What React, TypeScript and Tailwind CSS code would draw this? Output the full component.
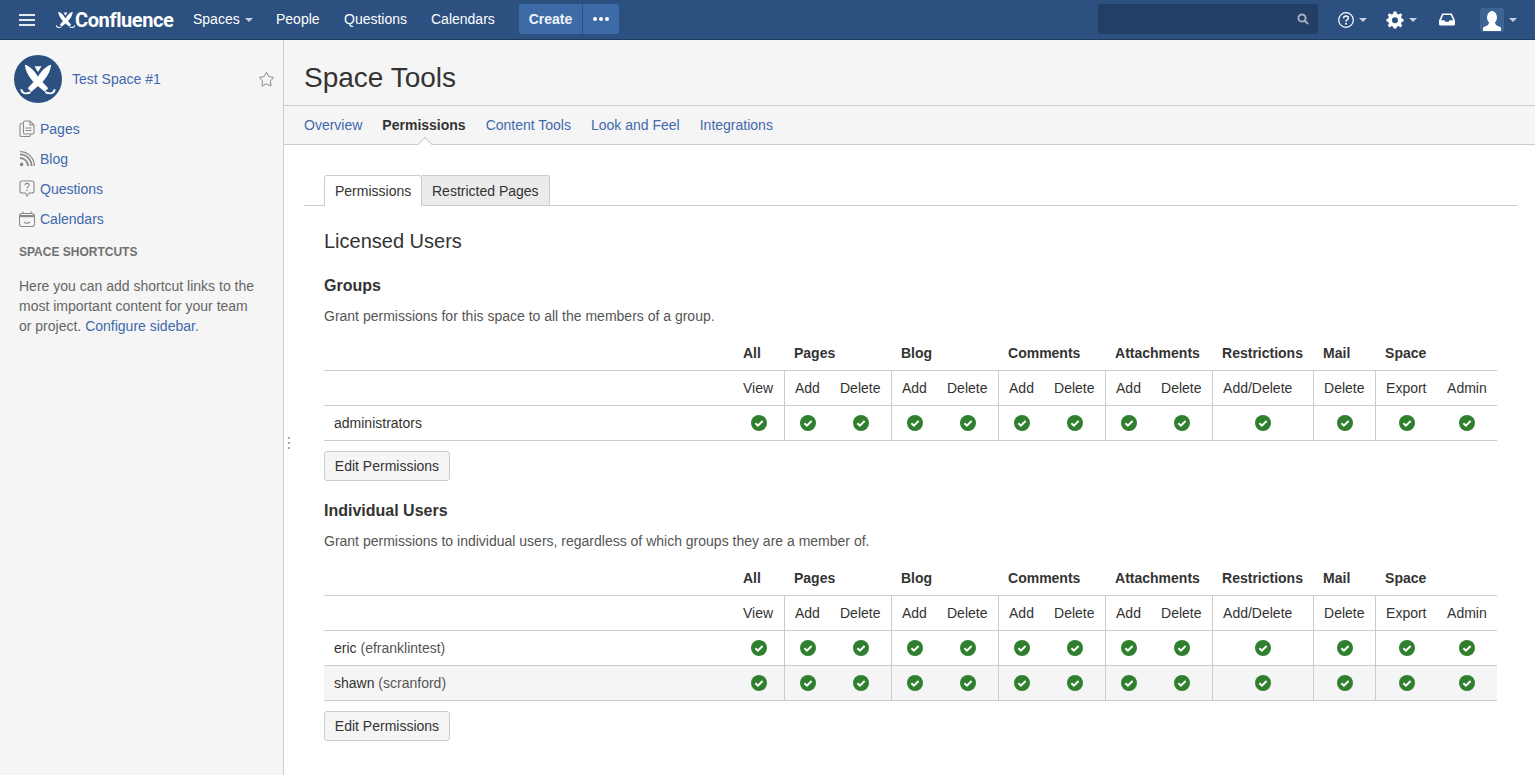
import React from 'react';
import { Star } from 'lucide-react';

const font = "[font-family:'Liberation_Sans',Arial,sans-serif]";

function Caret({ className = '' }: { className?: string }) {
	return <span className={`inline-block w-0 h-0 border-x-[4px] border-x-transparent border-t-[4px] ${className}`} />;
}

function CheckIcon() {
	return (
		<svg width="16" height="16" viewBox="0 0 16 16" className="block mx-auto">
			<circle cx="8" cy="8" r="8" fill="#2f7f2f" />
			<path d="M4.4 8.2 L6.9 10.6 L11.6 6" fill="none" stroke="#fff" strokeWidth="2" />
		</svg>
	);
}

// same mark in the sidebar circle and the top bar
function SpaceLogo({ size, className = '' }: { size: number; className?: string }) {
	return (
		<svg width={size} height={size} viewBox="5 8 39 33" className={`shrink-0 ${className}`} fill="#fff">
			<path d="M11 10 C16 11 21 16 25 23 L35 34 L31.5 37.5 C21 30 12 21 11 10 Z" />
			<path d="M38 10 C33 11 28 16 24 23 L14 34 L17.5 37.5 C28 30 37 21 38 10 Z" />
			<path d="M21 11.5 H28 L24.5 17.5 Z" />
			<path d="M17 38 C12 40.5 7.5 39 7.5 35" fill="none" stroke="#fff" strokeWidth="2" />
			<path d="M32 38 C37 40.5 41.5 39 41.5 35" fill="none" stroke="#fff" strokeWidth="2" />
		</svg>
	);
}

function PagesIcon() {
	return (
		<svg width="16" height="18" viewBox="0 0 16 18" fill="none" stroke="#8a8a8a" strokeWidth="1.1">
			<path d="M3.5 3.5 H2.5 Q1 3.5 1 5 V15 Q1 16.5 2.5 16.5 H10 Q11.5 16.5 11.5 15 V14" />
			<path d="M6 1 H11 L15 5 V12.5 Q15 14 13.5 14 H6 Q4.5 14 4.5 12.5 V2.5 Q4.5 1 6 1 Z" />
			<path d="M11 1 V5 H15 M6.5 8 H12.5 M6.5 10.5 H12.5" />
		</svg>
	);
}

function BlogIcon() {
	return (
		<svg width="16" height="16" viewBox="0 0 16 16" fill="none" stroke="#8a8a8a" strokeWidth="1.8">
			<circle cx="2.6" cy="13.4" r="1.8" fill="#8a8a8a" stroke="none" />
			<path d="M1 7 A8 8 0 0 1 9 15" />
			<path d="M1 3.4 A11.6 11.6 0 0 1 12.6 15" />
			<path d="M1 0.6 A14.4 14.4 0 0 1 15.4 15" strokeWidth="1.2" />
		</svg>
	);
}

function QuestionsIcon() {
	return (
		<svg width="16" height="18" viewBox="0 0 16 18" fill="none" stroke="#8a8a8a" strokeWidth="1.1">
			<path d="M3 1 H13 Q15 1 15 3 V11 Q15 13 13 13 H10.5 L8 16 L6.5 13 H3 Q1 13 1 11 V3 Q1 1 3 1 Z" />
			<path d="M5.8 5.2 Q6 3.4 8 3.4 Q10.1 3.4 10.1 5.2 Q10.1 6.3 8.9 6.9 Q8 7.3 8 8.6" />
			<circle cx="8" cy="10.5" r="0.8" fill="#8a8a8a" stroke="none" />
		</svg>
	);
}

function CalendarIcon() {
	return (
		<svg width="16" height="16" viewBox="0 0 16 16" fill="none" stroke="#8a8a8a" strokeWidth="1.1">
			<path d="M3 2.5 H13 Q15.5 2.5 15.5 5 V13 Q15.5 15.5 13 15.5 H3 Q0.5 15.5 0.5 13 V5 Q0.5 2.5 3 2.5 Z" />
			<path d="M0.5 4 H15.5 V6.2 H0.5 Z" fill="#8a8a8a" stroke="none" />
			<path d="M4 0.5 V3 M12 0.5 V3" />
			<path d="M5 11 Q8 13.5 11 11" />
		</svg>
	);
}

function TopBar() {
	return (
		<header className="h-[40px] bg-[#2c5080] border-b border-[#1e3a5f] flex items-center shrink-0 text-white text-[14px]">
			<svg width="16" height="12" viewBox="0 0 16 12" className="ml-[19px]" fill="#e4e9f0">
				<rect width="16" height="2" />
				<rect y="5" width="16" height="2" />
				<rect y="10" width="16" height="2" />
			</svg>
			<div className="ml-[20px] flex items-center w-[138px] shrink-0">
				<SpaceLogo size={21} />
				<span className="[font-family:Roboto,sans-serif] font-bold text-[20px] leading-[24px] tracking-[-0.4px] -ml-px">Confluence</span>
			</div>
			<div className="flex items-center w-[83px]">
				<span>Spaces</span>
				<Caret className="ml-[5px] border-t-[#c8d2e0]" />
			</div>
			<span className="w-[68px]">People</span>
			<span className="w-[87px]">Questions</span>
			<span className="w-[88px]">Calendars</span>
			<div className="flex h-[30px] gap-px -mt-px">
				<button className="w-[63px] bg-[#3d6ba8] rounded-l-[3px] font-bold text-[14px] text-[#f0f4f9]">Create</button>
				<button className="w-[36px] bg-[#3d6ba8] rounded-r-[3px] flex items-center justify-center gap-[2px]">
					<span className="w-[4px] h-[4px] rounded-full bg-white" />
					<span className="w-[4px] h-[4px] rounded-full bg-white" />
					<span className="w-[4px] h-[4px] rounded-full bg-white" />
				</button>
			</div>
			<div className="ml-auto -mt-px w-[220px] h-[30px] rounded-[3px] bg-[#233f66] flex items-center justify-end pr-[9px]">
				<svg width="12" height="12" viewBox="0 0 12 12" fill="none" stroke="#a3afbf" strokeWidth="2">
					<circle cx="5" cy="5" r="3.6" />
					<path d="M7.8 7.8 L11 11" />
				</svg>
			</div>
			<svg width="16" height="16" viewBox="0 0 16 16" className="ml-[20px]" fill="none" stroke="#fff" strokeWidth="1.2">
				<circle cx="8" cy="8" r="7.3" />
				<path d="M5.6 6.2 Q5.7 4 8 4 Q10.4 4 10.4 6 Q10.4 7.2 9 7.9 Q8 8.4 8 9.8" strokeWidth="1.4" />
				<circle cx="8" cy="11.8" r="1" fill="#fff" stroke="none" />
			</svg>
			<Caret className="ml-[5px] border-t-[#c8d2e0]" />
			<svg width="18" height="18" viewBox="0 0 18 18" className="ml-[19px]">
				<path fill="#fff" fillRule="evenodd" d="M7.6 0.5 H10.4 L10.9 2.8 L12.5 3.5 L14.5 2.2 L16.3 4 L15 6 L15.7 7.6 L17.5 8 V10.6 L15.7 11 L15 12.6 L16.2 14.6 L14.4 16.4 L12.4 15.1 L10.9 15.8 L10.4 17.5 H7.6 L7.1 15.8 L5.6 15.1 L3.6 16.4 L1.8 14.6 L3 12.6 L2.3 11 L0.5 10.6 V8 L2.3 7.6 L3 6 L1.7 4 L3.5 2.2 L5.5 3.5 L7.1 2.8 Z M9 6.2 A3 3 0 1 0 9 12.2 A3 3 0 1 0 9 6.2 Z" />
			</svg>
			<Caret className="ml-[5px] border-t-[#c8d2e0]" />
			<svg width="16" height="13" viewBox="0 0 16 13" className="ml-[22px]">
				<path fill="#fff" fillRule="evenodd" d="M3.2 0.5 H12.8 L16 7.5 V11 Q16 12.5 14.5 12.5 H1.5 Q0 12.5 0 11 V7.5 Z M4.2 2 L2 7.2 H5.5 L6.3 8.8 H9.7 L10.5 7.2 H14 L11.8 2 Z" />
			</svg>
			<div className="ml-[25px] w-[24px] h-[24px] rounded-[2px] bg-[#3d6395] flex items-end justify-center overflow-hidden">
				<svg width="20" height="22" viewBox="0 0 20 22" fill="#fff">
					<ellipse cx="10" cy="7.5" rx="5" ry="6.5" />
					<path d="M7 13 H13 L14 15 L19 17.5 V21 H1 V17.5 L6 15 Z" />
				</svg>
			</div>
			<Caret className="ml-[5px] mr-[18px] border-t-[#c8d2e0]" />
		</header>
	);
}

const sideLinks = [
	{ text: 'Pages', icon: <PagesIcon /> },
	{ text: 'Blog', icon: <BlogIcon /> },
	{ text: 'Questions', icon: <QuestionsIcon /> },
	{ text: 'Calendars', icon: <CalendarIcon /> },
];

function Sidebar() {
	return (
		<aside className="w-[284px] shrink-0 bg-[#f5f5f5] border-r border-[#cccccc] pt-[15px] text-[14px]">
			<div className="flex items-center pl-[14px] pr-[8px]">
				<div className="w-[48px] h-[48px] rounded-full bg-[#2c5080] flex items-center justify-center shrink-0">
					<SpaceLogo size={38} />
				</div>
				<span className="ml-[10px] text-[#3f68ad] leading-[20px]">Test Space #1</span>
				<Star size={17} strokeWidth={1.1} className="ml-auto text-[#666666]" />
			</div>
			<ul className="mt-[11px]">
				{sideLinks.map((l) => (
					<li key={l.text} className="h-[30px] flex items-center pl-[19px] text-[#3f68ad]">
						<span className="w-[21px] flex items-center">{l.icon}</span>
						{l.text}
					</li>
				))}
			</ul>
			<h5 className="mt-[8px] pl-[19px] text-[12px] leading-[20px] font-bold text-[#707070]">SPACE SHORTCUTS</h5>
			<p className="mt-[14px] pl-[19px] pr-[20px] leading-[20px] text-[#666666]">
				Here you can add shortcut links to the most important content for your team or project.{' '}
				<span className="text-[#3f68ad]">Configure sidebar</span>.
			</p>
		</aside>
	);
}

const groups = [
	{ name: 'All', span: 1, pad: 'pl-[10px]' },
	{ name: 'Pages', span: 2, pad: 'pl-[9px]' },
	{ name: 'Blog', span: 2, pad: 'pl-[9px]' },
	{ name: 'Comments', span: 2, pad: 'pl-[9px]' },
	{ name: 'Attachments', span: 2, pad: 'pl-[9px]' },
	{ name: 'Restrictions', span: 1, pad: 'pl-[9px]' },
	{ name: 'Mail', span: 1, pad: 'pl-[9px]' },
	{ name: 'Space', span: 2, pad: 'pl-[9px]' },
];

const columns = [
	{ name: 'View', w: 'w-[52px]', end: true, pad: 'pl-[10px]' },
	{ name: 'Add', w: 'w-[46px]', end: false, pad: 'pl-[10px]' },
	{ name: 'Delete', w: 'w-[61px]', end: true, pad: 'pl-[9px]' },
	{ name: 'Add', w: 'w-[46px]', end: false, pad: 'pl-[10px]' },
	{ name: 'Delete', w: 'w-[61px]', end: true, pad: 'pl-[9px]' },
	{ name: 'Add', w: 'w-[46px]', end: false, pad: 'pl-[10px]' },
	{ name: 'Delete', w: 'w-[61px]', end: true, pad: 'pl-[9px]' },
	{ name: 'Add', w: 'w-[46px]', end: false, pad: 'pl-[10px]' },
	{ name: 'Delete', w: 'w-[61px]', end: true, pad: 'pl-[9px]' },
	{ name: 'Add/Delete', w: 'w-[101px]', end: true, pad: 'pl-[10px]' },
	{ name: 'Delete', w: 'w-[62px]', end: true, pad: 'pl-[10px]' },
	{ name: 'Export', w: 'w-[61px]', end: false, pad: 'pl-[10px]' },
	{ name: 'Admin', w: 'w-[60px]', end: false, pad: 'pl-[10px]' },
];

function PermTable({ rows }: { rows: { name: string; id?: string; alt?: boolean }[] }) {
	return (
		<table className="w-full table-fixed border-separate border-spacing-0 text-[14px] text-[#333333]">
			<colgroup>
				<col className="w-[409px]" />
				{columns.map((c, i) => (
					<col key={i} className={c.w} />
				))}
			</colgroup>
			<thead>
				<tr>
					<th className="h-[35px] border-b border-[#cccccc]" />
					{groups.map((g) => (
						<th key={g.name} colSpan={g.span} className={`h-[35px] border-b border-[#cccccc] text-left font-bold ${g.pad}`}>
							{g.name}
						</th>
					))}
				</tr>
				<tr>
					<th className="h-[35px] border-b border-[#cccccc]" />
					{columns.map((c, i) => (
						<th
							key={i}
							className={`h-[35px] border-b border-[#cccccc] text-left font-normal whitespace-nowrap ${c.pad} ${c.end ? 'border-r' : ''}`}
						>
							{c.name}
						</th>
					))}
				</tr>
			</thead>
			<tbody>
				{rows.map((r) => (
					<tr key={r.name} className={r.alt ? 'bg-[#f5f5f5]' : ''}>
						<td className="h-[35px] border-b border-[#cccccc] pl-[10px]">
							{r.name}
							{r.id && <span className="text-[#555555]"> ({r.id})</span>}
						</td>
						{columns.map((c, i) => (
							<td key={i} className={`h-[35px] border-b border-[#cccccc] ${c.end ? 'border-r' : ''}`}>
								<CheckIcon />
							</td>
						))}
					</tr>
				))}
			</tbody>
		</table>
	);
}

function EditButton() {
	return (
		<button className="mt-[10px] block h-[30px] w-[126px] rounded-[3px] border border-[#cccccc] bg-[#f5f5f5] text-[14px] text-[#333333]">
			Edit Permissions
		</button>
	);
}

function Main() {
	return (
		<main className="flex-1 min-w-0 bg-white relative">
			<div className="h-[66px] bg-[#f5f5f5] border-b border-[#cccccc] pl-[20px] flex items-center">
				<h1 className="text-[28px] leading-[36px] text-[#333333] mt-[11px]">Space Tools</h1>
			</div>
			<nav className="relative h-[39px] bg-[#f5f5f5] border-b border-[#cccccc] pl-[20px] flex items-center gap-[20px] text-[14px] text-[#3f68ad]">
				<span>Overview</span>
				<span className="font-bold text-[#333333]">Permissions</span>
				<span>Content Tools</span>
				<span>Look and Feel</span>
				<span>Integrations</span>
				<span className="absolute left-[136px] -bottom-[5px] w-[10px] h-[10px] rotate-45 bg-white border-l border-t border-[#cccccc]" />
			</nav>
			<div className="pl-[20px] pr-[18px] pt-[30px]">
				<div className="flex h-[31px] pl-[20px] border-b border-[#cccccc] text-[14px] text-[#333333]">
					<div className="h-[31px] w-[98px] flex items-center pl-[10px] bg-white border border-b-0 border-[#cccccc] rounded-t-[3px]">
						Permissions
					</div>
					<div className="h-[30px] w-[128px] flex items-center pl-[10px] pt-[2px] bg-[#ebebeb] border border-l-0 border-b-0 border-[#cccccc] rounded-tr-[3px]">
						Restricted Pages
					</div>
				</div>
				<div className="px-[20px] text-[#333333]">
					<h2 className="mt-[20px] text-[20px] leading-[30px]">Licensed Users</h2>
					<h3 className="mt-[20px] text-[16px] leading-[20px] font-bold">Groups</h3>
					<p className="mt-[10px] mb-[10px] text-[14px] leading-[20px] text-[#555555]">
						Grant permissions for this space to all the members of a group.
					</p>
					<PermTable rows={[{ name: 'administrators' }]} />
					<EditButton />
					<h3 className="mt-[20px] text-[16px] leading-[20px] font-bold">Individual Users</h3>
					<p className="mt-[10px] mb-[10px] text-[14px] leading-[20px] text-[#555555]">
						Grant permissions to individual users, regardless of which groups they are a member of.
					</p>
					<PermTable
						rows={[
							{ name: 'eric', id: 'efranklintest' },
							{ name: 'shawn', id: 'scranford', alt: true },
						]}
					/>
					<EditButton />
				</div>
			</div>
			<div className="absolute left-[4px] top-[397px] flex flex-col gap-[3px]">
				<span className="w-[2px] h-[2px] bg-[#aaaaaa]" />
				<span className="w-[2px] h-[2px] bg-[#aaaaaa]" />
				<span className="w-[2px] h-[2px] bg-[#aaaaaa]" />
			</div>
		</main>
	);
}

function App() {
	return (
		<div className={`h-screen overflow-hidden flex flex-col ${font}`}>
			<TopBar />
			<div className="flex flex-1 min-h-0">
				<Sidebar />
				<Main />
			</div>
		</div>
	);
}

export default App;
